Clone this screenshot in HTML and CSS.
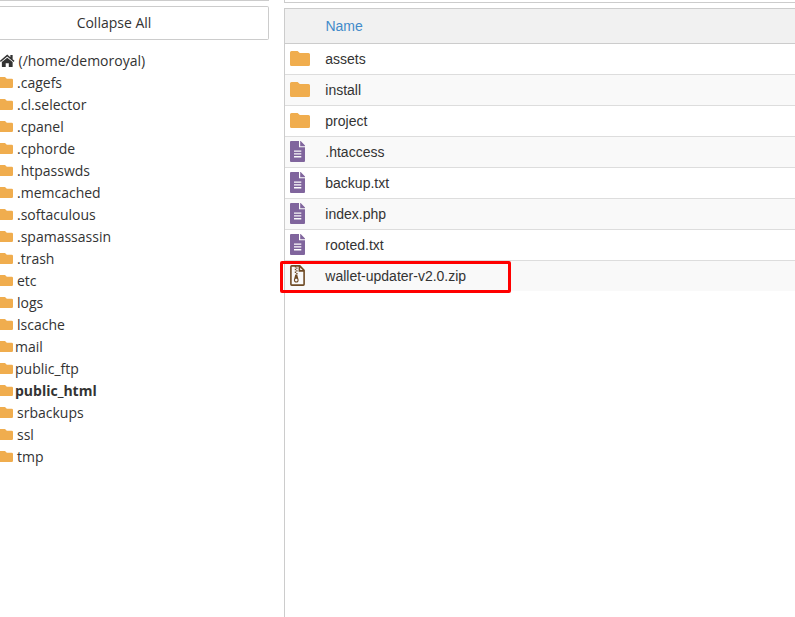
FILE: index.html
```html
<!DOCTYPE html>
<html lang="en">
<head>
<meta charset="utf-8">
<title>File Manager</title>
<link rel="stylesheet" href="styles.css">
</head>
<body>
<svg class="defs" aria-hidden="true">
  <symbol id="folder" viewBox="0 0 20 15"><path d="M1.5 0H7.6L9.8 2H18.5Q20 2 20 3.5V13.5Q20 15 18.5 15H1.5Q0 15 0 13.5V1.5Q0 0 1.5 0Z"/></symbol>
  <symbol id="branch" viewBox="0 0 13 11"><path d="M0 0H5L6.8 1.7H11.8Q13 1.7 13 2.9V9.8Q13 11 11.8 11H0Z"/></symbol>
  <symbol id="file" viewBox="0 0 15 20" preserveAspectRatio="none"><path fill-rule="evenodd" d="M1 0H9V6H15V19Q15 20 14 20H1Q0 20 0 19V1Q0 0 1 0ZM4 9V10.2H11.3V9ZM4 11.7V12.9H11.3V11.7ZM4 14.4V15.6H11.3V14.4ZM10.2 0H10.7L15 4.3V4.9H10.2Z"/></symbol>
  <symbol id="zip" viewBox="0 0 15 20" preserveAspectRatio="none">
    <path class="outline" d="M1.7.9H9.8L14.1 5.2V18.3Q14.1 19.1 13.3 19.1H1.7Q.9 19.1.9 18.3V1.7Q.9.9 1.7.9ZM9.4 1V5.6H14"/>
    <path d="M4.8 1H6.2V2.3H4.8ZM6.2 2.3H7.6V3.6H6.2ZM4.8 3.6H6.2V4.9H4.8ZM6.2 4.9H7.6V6.2H6.2ZM4.8 6.2H6.2V7.5H4.8ZM6.2 7.5H7.6V8.8H6.2Z"/>
    <path fill-rule="evenodd" d="M5.3 9H7.2L8.6 14Q8.9 16.7 6.3 16.7T3.9 14ZM6.3 13.2C4.6 13.2 4.6 15.6 6.3 15.6S8 13.2 6.3 13.2Z"/>
  </symbol>
</svg>
<div class="manager">
  <aside class="sidebar">
    <div class="path-bar"></div>
    <button class="collapse">Collapse All</button>
    <ul class="tree">
      <li class="home"><svg class="home-icon" viewBox="0 0 14 13"><path d="M7 .5 10 3V1H12.2V5L14 6.6 13.2 7.6 7 2.4.7 7.6-.2 6.6Z"/><path d="M7 3.5 12.2 7.8V12Q12.2 12.5 11.7 12.5H8.5V8.8H5.5V12.5H2.3Q1.8 12.5 1.8 12V7.8Z"/></svg><span>(/home/demoroyal)</span></li>
      <li><svg class="branch"><use href="#branch"/></svg><span>.cagefs</span></li>
      <li><svg class="branch"><use href="#branch"/></svg><span>.cl.selector</span></li>
      <li><svg class="branch"><use href="#branch"/></svg><span>.cpanel</span></li>
      <li><svg class="branch"><use href="#branch"/></svg><span>.cphorde</span></li>
      <li><svg class="branch"><use href="#branch"/></svg><span>.htpasswds</span></li>
      <li><svg class="branch"><use href="#branch"/></svg><span>.memcached</span></li>
      <li><svg class="branch"><use href="#branch"/></svg><span>.softaculous</span></li>
      <li><svg class="branch"><use href="#branch"/></svg><span>.spamassassin</span></li>
      <li><svg class="branch"><use href="#branch"/></svg><span>.trash</span></li>
      <li><svg class="branch"><use href="#branch"/></svg><span>etc</span></li>
      <li><svg class="branch"><use href="#branch"/></svg><span>logs</span></li>
      <li><svg class="branch"><use href="#branch"/></svg><span>lscache</span></li>
      <li class="special"><svg class="branch"><use href="#branch"/></svg><span>mail</span></li>
      <li class="special"><svg class="branch"><use href="#branch"/></svg><span>public_ftp</span></li>
      <li class="special current"><svg class="branch"><use href="#branch"/></svg><span>public_html</span></li>
      <li><svg class="branch"><use href="#branch"/></svg><span>srbackups</span></li>
      <li><svg class="branch"><use href="#branch"/></svg><span>ssl</span></li>
      <li><svg class="branch"><use href="#branch"/></svg><span>tmp</span></li>
    </ul>
  </aside>
  <main class="content">
    <div class="toolbar"></div>
    <section class="listing">
      <div class="header">Name</div>
      <div class="row"><svg class="folder"><use href="#folder"/></svg><span>assets</span></div>
      <div class="row"><svg class="folder"><use href="#folder"/></svg><span>install</span></div>
      <div class="row"><svg class="folder"><use href="#folder"/></svg><span>project</span></div>
      <div class="row"><svg class="file"><use href="#file"/></svg><span>.htaccess</span></div>
      <div class="row"><svg class="file"><use href="#file"/></svg><span>backup.txt</span></div>
      <div class="row"><svg class="file"><use href="#file"/></svg><span>index.php</span></div>
      <div class="row"><svg class="file"><use href="#file"/></svg><span>rooted.txt</span></div>
      <div class="row marked"><svg class="zip"><use href="#zip"/></svg><span>wallet-updater-v2.0.zip</span></div>
    </section>
  </main>
</div>
</body>
</html>
```
FILE: styles.css
```css
*, *::after { box-sizing: border-box; }
body { margin: 0; background: #fff; color: #333; overflow: hidden; }
svg { display: block; flex: none; }
.defs { display: none; }
.manager { display: flex; height: 617px; }

.sidebar { width: 269px; margin-right: 15px; font: 14px/22px "Open Sans", sans-serif; }
.path-bar { height: 6px; border-top: 1px solid #ccc; }
.collapse {
  display: block; width: 100%; height: 34px; padding: 0 40px 0 0;
  border: 1px solid #ccc; border-left: 0; border-radius: 0 2px 2px 0;
  background: #fff; color: #333; font: inherit; text-align: center;
}
.tree { list-style: none; margin: 10px 0 0; padding: 0; }
.tree li { display: flex; align-items: center; height: 22px; gap: 4px; white-space: nowrap; }
.tree .special { gap: 2px; }
.tree .current { font-weight: 700; }
.home-icon { width: 14.5px; height: 13.5px; margin-bottom: 1px; fill: #333; }
.branch { width: 13px; height: 11px; margin-bottom: 1px; fill: #f0ad4e; }

.content { flex: 1; display: flex; flex-direction: column; min-width: 0; font: 14px/20px "Liberation Sans", Arial, sans-serif; }
.toolbar { height: 3px; margin-bottom: 5px; border: solid #ccc; border-width: 0 0 1px 1px; }
.listing { flex: 1; border: solid #ccc; border-width: 1px 0 0 1px; }
.header { height: 35px; padding: 7px 0 0 40.4px; border-bottom: 1px solid #ccc; background: #f1f1f1; color: #428bca; }
.row { position: relative; display: flex; align-items: center; height: 31px; padding-left: 5px; border-bottom: 1px solid #ddd; }
.row:nth-child(odd) { background: #f9f9f9; }
.row:last-child { border-bottom: 0; height: 30px; }
.folder { width: 20px; height: 15px; margin: 0 15.3px 1px 0; fill: #f0ad4e; }
.file, .zip { width: 15px; height: 21px; margin: 0 20.3px 1px 0; }
.file { fill: #80659d; }
.zip { fill: #6f4b25; }
.outline { fill: none; stroke: #6f4b25; stroke-width: 1.6; }
.marked::after {
  content: ""; position: absolute; left: -5px; top: 0; width: 231px; height: 32px;
  border: 3px solid #f00; border-radius: 2px;
}
```
